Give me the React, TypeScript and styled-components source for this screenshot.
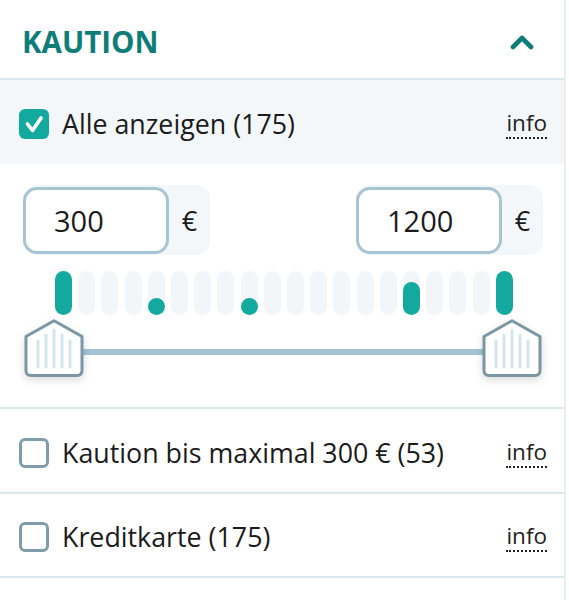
import styled, { createGlobalStyle } from "styled-components";

const GlobalStyle = createGlobalStyle`
  body {
    margin: 0;
    background: #ffffff;
    font-family: "Open Sans", "Noto Sans", sans-serif;
    color: #1b1b1b;
  }
`;

const Panel = styled.div`
  width: 564px;
  border-right: 2px solid #e8edf0;
  min-height: 600px;
`;

const Header = styled.div`
  display: flex;
  align-items: center;
  justify-content: space-between;
  height: 80px;
  padding: 5px 30px 0 22px;
  box-sizing: border-box;
  border-bottom: 2px solid #d9e6ed;
`;

const Title = styled.h2`
  margin: 0;
  font-size: 29.5px;
  font-weight: 700;
  color: #0e7d78;
`;

const OptionRow = styled.div<{ $active?: boolean; $height: number }>`
  display: flex;
  align-items: center;
  height: ${(p) => p.$height}px;
  padding: 4px 17px 0 19px;
  box-sizing: border-box;
  background: ${(p) => (p.$active ? "#f4f7fa" : "#ffffff")};
  border-bottom: ${(p) => (p.$active ? "none" : "2px solid #d9e6ed")};
`;

const Box = styled.span<{ $checked?: boolean }>`
  display: flex;
  align-items: center;
  justify-content: center;
  width: 30px;
  height: 30px;
  box-sizing: border-box;
  border-radius: 6px;
  flex-shrink: 0;
  background: ${(p) => (p.$checked ? "#14a99e" : "#ffffff")};
  border: ${(p) => (p.$checked ? "none" : "3px solid #7f9cab")};
`;

const Label = styled.span`
  flex: 1;
  margin-left: 13px;
  font-size: 26.8px;
  line-height: 34px;
`;

const Info = styled.span`
  font-size: 22.5px;
  line-height: 28px;
  color: #222;
  border-bottom: 2px dotted #222;
`;

const SliderSection = styled.div`
  padding: 21px 21px 29px 23px;
  border-bottom: 2px solid #d9e6ed;
`;

const InputsRow = styled.div`
  display: flex;
  justify-content: space-between;
`;

const InputGroup = styled.div`
  display: flex;
  align-items: center;
  width: 187px;
  height: 70px;
  border-radius: 14px;
  background: #f3f7fa;
`;

const ValueInput = styled.input`
  width: 146px;
  height: 67px;
  box-sizing: border-box;
  border: 3px solid #a6c5d4;
  border-radius: 14px;
  background: #ffffff;
  padding: 0 0 0 28px;
  font-family: "Open Sans", "Noto Sans", sans-serif;
  font-size: 29px;
  color: #1b1b1b;
  outline: none;
`;

const Currency = styled.span`
  flex: 1;
  text-align: center;
  font-size: 27px;
`;

const Histogram = styled.div`
  display: flex;
  justify-content: space-between;
  width: 458px;
  height: 44px;
  margin: 16px 0 0 32px;
`;

const Bar = styled.div`
  width: 17px;
  height: 100%;
  border-radius: 9px;
  background: #f2f6f9;
  display: flex;
  align-items: flex-end;
`;

const BarFill = styled.div`
  width: 100%;
  border-radius: 9px;
  background: #13a99e;
`;

const TrackRow = styled.div`
  display: flex;
  align-items: flex-start;
  margin-top: 4px;
`;

const Track = styled.div`
  flex: 1;
  height: 6px;
  margin: 30px -2px 0;
  background: #a3c4d4;
`;

const HandleSvg = styled.svg`
  width: 62px;
  height: 59px;
  flex-shrink: 0;
  position: relative;
  z-index: 1;
  filter: drop-shadow(0 3px 4px rgba(0, 0, 0, 0.14));
`;

function Handle() {
  const lines = [
    { x: 15, top: 22 },
    { x: 23, top: 16 },
    { x: 31, top: 11 },
    { x: 39, top: 16 },
    { x: 47, top: 22 },
  ];
  return (
    <HandleSvg viewBox="0 0 62 59">
      <path
        d="M31 1.8 L59 17.5 V51.5 Q59 56.5 54 56.5 H8 Q3 56.5 3 51.5 V17.5 Z"
        fill="#ffffff"
        stroke="#7b97a6"
        strokeWidth="3"
        strokeLinejoin="round"
      />
      {lines.map((l) => (
        <line
          key={l.x}
          x1={l.x}
          x2={l.x}
          y1={l.top}
          y2={48}
          stroke="#d3e5ee"
          strokeWidth="3"
          strokeLinecap="round"
        />
      ))}
    </HandleSvg>
  );
}

function Checkbox({ checked }: { checked?: boolean }) {
  return (
    <Box $checked={checked}>
      {checked && (
        <svg width="30" height="30" viewBox="0 0 30 30">
          <polyline
            points="8.5,15 13.5,21.5 22,9"
            fill="none"
            stroke="#ffffff"
            strokeWidth="3.6"
            strokeLinecap="round"
            strokeLinejoin="round"
          />
        </svg>
      )}
    </Box>
  );
}

const bars = [44, 0, 0, 0, 17, 0, 0, 0, 17, 0, 0, 0, 0, 0, 0, 33, 0, 0, 0, 44];

export default function App() {
  return (
    <>
      <GlobalStyle />
      <Panel>
        <Header>
          <Title>KAUTION</Title>
          <svg width="24" height="16" viewBox="0 0 24 16">
            <polyline
              points="3,13 12,4 21,13"
              fill="none"
              stroke="#0e7d78"
              strokeWidth="4.6"
              strokeLinecap="round"
              strokeLinejoin="round"
            />
          </svg>
        </Header>
        <OptionRow $active $height={84}>
          <Checkbox checked />
          <Label>Alle anzeigen (175)</Label>
          <Info>info</Info>
        </OptionRow>
        <SliderSection>
          <InputsRow>
            <InputGroup>
              <ValueInput defaultValue="300" readOnly />
              <Currency>€</Currency>
            </InputGroup>
            <InputGroup>
              <ValueInput defaultValue="1200" readOnly />
              <Currency>€</Currency>
            </InputGroup>
          </InputsRow>
          <Histogram>
            {bars.map((h, i) => (
              <Bar key={i}>
                {h > 0 && <BarFill style={{ height: h }} />}
              </Bar>
            ))}
          </Histogram>
          <TrackRow>
            <Handle />
            <Track />
            <Handle />
          </TrackRow>
        </SliderSection>
        <OptionRow $height={85}>
          <Checkbox />
          <Label>Kaution bis maximal 300 € (53)</Label>
          <Info>info</Info>
        </OptionRow>
        <OptionRow $height={84}>
          <Checkbox />
          <Label>Kreditkarte (175)</Label>
          <Info>info</Info>
        </OptionRow>
      </Panel>
    </>
  );
}
